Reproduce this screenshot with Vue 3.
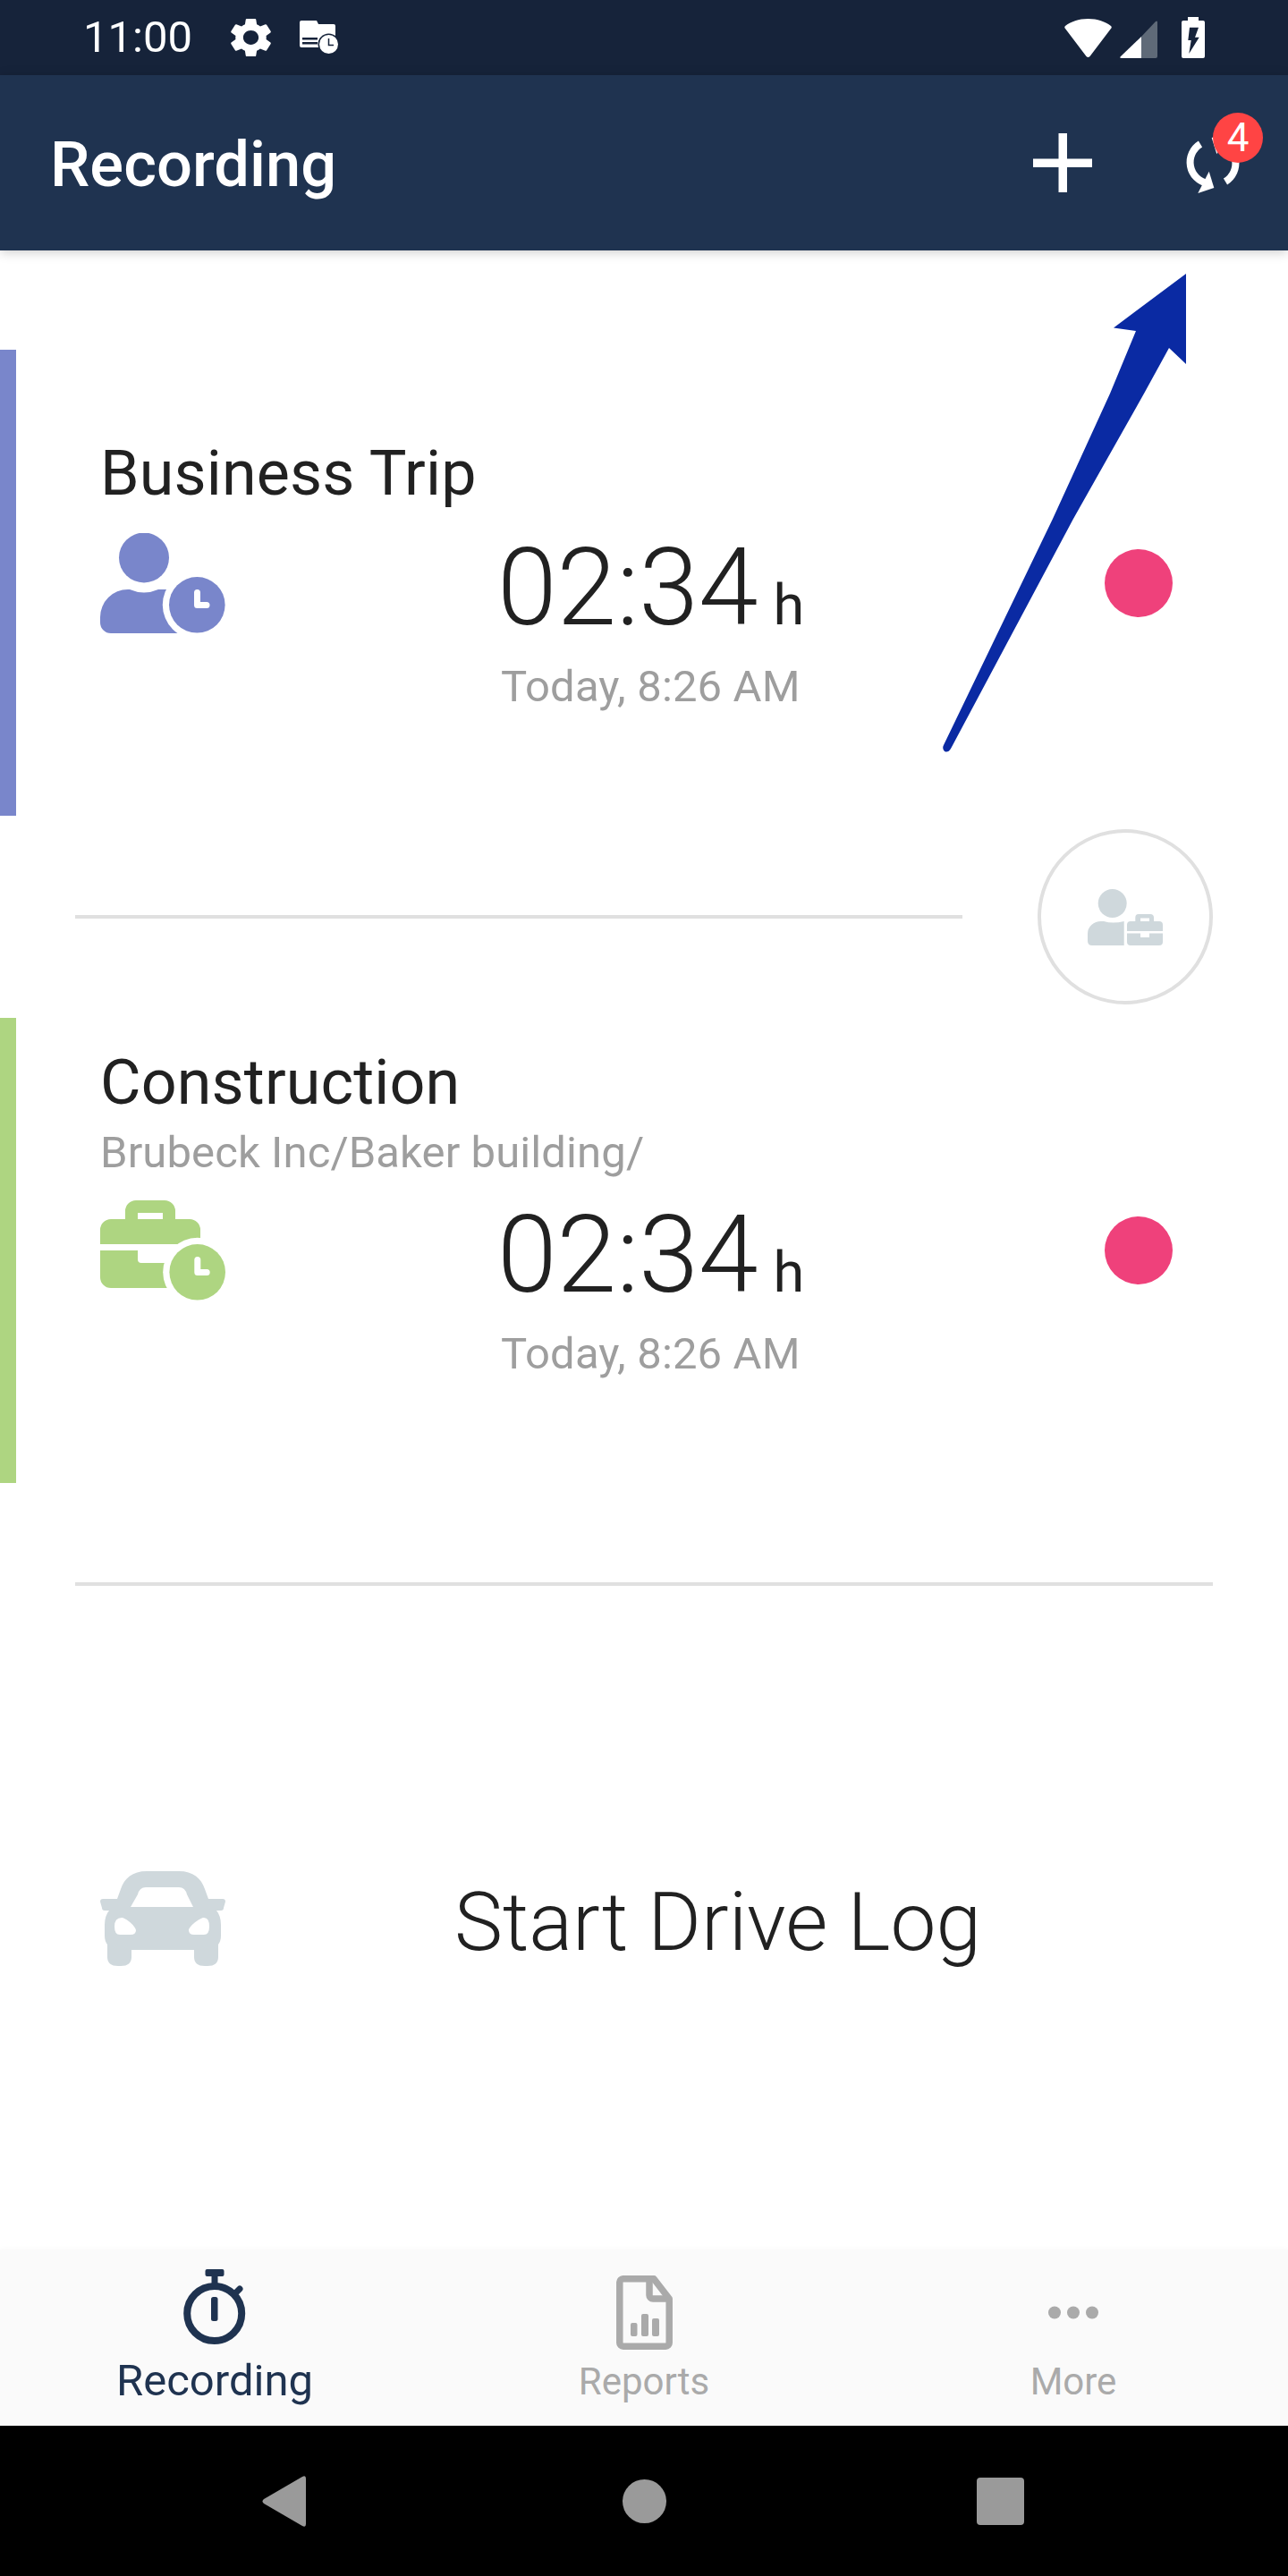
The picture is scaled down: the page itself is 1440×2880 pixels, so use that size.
<template>
  <div class="phone">
    <header class="status-bar">
      <span class="clock">11:00</span>
      <svg class="gear" viewBox="2.6 2 18.8 20" preserveAspectRatio="none">
        <path fill="#fff" d="M19.14 12.94c.04-.3.06-.61.06-.94 0-.32-.02-.64-.07-.94l2.03-1.58c.18-.14.23-.41.12-.61l-1.92-3.32c-.12-.22-.37-.29-.59-.22l-2.39.96c-.5-.38-1.03-.7-1.62-.94l-.36-2.54c-.04-.24-.24-.41-.48-.41h-3.84c-.24 0-.43.17-.47.41l-.36 2.54c-.59.24-1.13.57-1.62.94l-2.39-.96c-.22-.08-.47 0-.59.22L2.74 8.87c-.12.21-.08.47.12.61l2.03 1.58c-.05.3-.09.63-.09.94s.02.64.07.94l-2.03 1.58c-.18.14-.23.41-.12.61l1.92 3.32c.12.22.37.29.59.22l2.39-.96c.5.38 1.03.7 1.62.94l.36 2.54c.05.24.24.41.48.41h3.84c.24 0 .44-.17.47-.41l.36-2.54c.59-.24 1.13-.56 1.62-.94l2.39.96c.22.08.47 0 .59-.22l1.92-3.32c.12-.22.07-.47-.12-.61l-2.01-1.58zM12 15.6c-1.98 0-3.6-1.62-3.6-3.6s1.62-3.6 3.6-3.6 3.6 1.62 3.6 3.6-1.62 3.6-3.6 3.6z" />
      </svg>
      <svg class="notif" viewBox="0 0 43 37">
        <path fill="#fff" d="M2 0H19L21 4H38Q40 4 40 6V30H2Q0 30 0 28V2Q0 0 2 0Z" />
        <path fill="#16233a" d="M3 19H20V21.500H3ZM3 24H20V26.500H3Z" />
        <circle cx="32.500" cy="26.500" r="12" fill="#16233a" />
        <circle cx="32.500" cy="26.500" r="10.500" fill="#fff" />
        <path fill="none" stroke="#16233a" stroke-width="1.500" d="M32.500 20V27.500H38" />
      </svg>
      <div class="status-right">
        <svg class="wifi" viewBox="0 0 53 43">
          <path fill="#fff" d="M26.500 0C37 0 46 3.500 52 8Q53.500 9.500 52 11L28.500 42Q26.500 44 24.500 42L1 11Q-.5 9.500 1 8C7 3.500 16 0 26.500 0Z" />
        </svg>
        <svg class="signal" viewBox="0 0 42 42">
          <path fill="#5f6a78" d="M24 18L40 1Q42 -.5 42 2V40Q42 42 40 42H24Z" />
          <path fill="#fff" d="M24 18V42H2Q-1 42 1 40Z" />
        </svg>
        <svg class="battery" viewBox="0 0 26 46">
          <path fill="#fff" d="M7 0H19V4H24Q26 4 26 6V44Q26 46 24 46H2Q0 46 0 44V6Q0 4 2 4H7Z" />
          <path fill="#16233a" d="M9 11.700H19L15 22.700H19.700L8.300 41L10.700 26H7.300Z" />
        </svg>
      </div>
    </header>

    <div class="app-bar">
      <h1 class="app-title">Recording</h1>
      <svg class="plus" viewBox="0 0 66 66">
        <path fill="#fff" d="M28.500 0H38V28.500H66V38H38V66H28.500V38H0V28.500H28.500Z" />
      </svg>
      <div class="sync">
        <svg viewBox="0 0 80 80" width="80" height="80">
          <g>
            <path fill="none" stroke="#fff" stroke-width="8" d="M26 19A24 24 0 0 0 34 63" />
            <path fill="#fff" d="M35.700 49.700L41.300 68L23.300 74Z" />
          </g>
          <g transform="rotate(180 40 40)">
            <path fill="none" stroke="#fff" stroke-width="8" d="M26 19A24 24 0 0 0 34 63" />
            <path fill="#fff" d="M35.700 49.700L41.300 68L23.300 74Z" />
          </g>
        </svg>
        <span class="badge">4</span>
      </div>
    </div>

    <main class="content">
      <section class="card business">
        <h2 class="card-title">Business Trip</h2>
        <div class="card-row">
          <svg class="card-icon" viewBox="0 0 140 112">
            <circle cx="49" cy="27.500" r="28" fill="#7986cb" />
            <path fill="#7986cb" d="M0 100V94A31 31 0 0 1 31 63H33Q49 70 65 63H100V112H12A12 12 0 0 1 0 100Z" />
            <circle cx="108.300" cy="80.300" r="38.500" fill="#fff" />
            <circle cx="108.300" cy="80.300" r="31.300" fill="#7986cb" />
            <path fill="none" stroke="#fff" stroke-width="7" stroke-linejoin="round" stroke-linecap="round" d="M108.500 66.500V80.500H119" />
          </svg>
          <div class="timer">
            <div class="time">02:34<span class="unit">h</span></div>
            <div class="since">Today, 8:26 AM</div>
          </div>
          <span class="rec-dot"></span>
        </div>
      </section>

      <div class="switch-row">
        <div class="rule"></div>
        <div class="switch">
          <svg viewBox="0 0 84 63" width="84" height="63">
            <circle cx="27.700" cy="16" r="16" fill="#cfd8dc" />
            <path fill="#cfd8dc" d="M0 58V50A15 14 0 0 1 15 36H18Q28 39 40.700 36V63H5Q0 63 0 58Z" />
            <path fill="#cfd8dc" fill-rule="evenodd" d="M44 47V40Q44 36 48 36H53.300V32Q53.300 28 57 28H70Q74 28 74 32V36H80Q84 36 84 40V47ZM59 32.500V36H69V32.500Z" />
            <path fill="#cfd8dc" d="M44 49.500H59V54H69V49.500H84V59Q84 63 80 63H48Q44 63 44 59Z" />
          </svg>
        </div>
      </div>

      <section class="card construction">
        <h2 class="card-title">Construction</h2>
        <p class="card-sub">Brubeck Inc/Baker building/</p>
        <div class="card-row">
          <svg class="card-icon" viewBox="0 0 140 112">
            <path fill="#aed581" fill-rule="evenodd" d="M0 49V33A12 12 0 0 1 12 21H28V12A12 12 0 0 1 40 0H72A12 12 0 0 1 84 12V21H100A12 12 0 0 1 112 33V49ZM42 14V21H70V14Z" />
            <path fill="#aed581" d="M0 56H42V66A4 4 0 0 0 46 70H110V86A12 12 0 0 1 98 98H12A12 12 0 0 1 0 86Z" />
            <circle cx="108.700" cy="80.300" r="38.500" fill="#fff" />
            <circle cx="108.700" cy="80.300" r="31.300" fill="#aed581" />
            <path fill="none" stroke="#fff" stroke-width="7" stroke-linejoin="round" stroke-linecap="round" d="M108.800 66.500V80.500H119.200" />
          </svg>
          <div class="timer">
            <div class="time">02:34<span class="unit">h</span></div>
            <div class="since">Today, 8:26 AM</div>
          </div>
          <span class="rec-dot"></span>
        </div>
      </section>

      <div class="rule rule-full"></div>

      <div class="drive-log">
        <svg class="car" viewBox="0 0 140 106">
          <path fill="#cfd8dc" fill-rule="evenodd" d="M52 0H88C104 0 113 8 117 20L121 31H137Q140 31 140 34L138 41Q138 44 135 44H130Q135 50 135 60V72Q135 78 132 82V96Q132 106 120 106H117Q105 106 105 96V88H35V96Q35 106 23 106H20Q8 106 8 96V82Q5 78 5 72V60Q5 50 10 44H5Q2 44 2 41L0 34Q0 31 3 31H19L23 20C27 8 36 0 52 0ZM51 18Q44 18 42 26L34 40H104L97 26Q95 18 88 18ZM24 52C29 52 40 62 40 66Q40 71 34 71H22Q16 71 16 62Q16 52 24 52ZM116 52C111 52 99 62 99 66Q99 71 105 71H116Q122 71 122 62Q122 52 116 52Z" />
        </svg>
        <span class="drive-text">Start Drive Log</span>
      </div>

      <svg class="callout" viewBox="0 0 300 560" width="300" height="560">
        <path fill="#0a2aa3" d="M276 6V107L257 89L229 140L150 280L13 537Q10 542 6 540Q3 537 5 533L127 280L191 140L220 70L195 66.500Z" />
      </svg>
    </main>

    <nav class="tabs">
      <div v-for="tab in tabs" :key="tab.label" :class="['tab', { active: tab.active }]">
        <div class="tab-icon">
          <svg v-if="tab.label === 'Recording'" viewBox="0 0 70 84" width="70" height="84">
            <circle cx="34.700" cy="49.500" r="30.500" fill="none" stroke="#1f3350" stroke-width="8" />
            <rect x="24.500" y="0" width="21" height="8" rx="2" fill="#1f3350" />
            <rect x="31.500" y="6" width="7" height="10" fill="#1f3350" />
            <rect x="31" y="31" width="7.500" height="27" rx="2.500" fill="#1f3350" />
            <path stroke="#1f3350" stroke-width="7" stroke-linecap="round" d="M58 27L63 22" />
          </svg>
          <svg v-else-if="tab.label === 'Reports'" viewBox="0 0 63 83" width="63" height="83">
            <path fill="none" stroke="#aaa" stroke-width="7.500" stroke-linejoin="round" d="M7.500 3.800H42L59.200 26V75A4 4 0 0 1 55.200 79.200H7.800A4 4 0 0 1 3.800 75V7.500A4 4 0 0 1 7.500 3.800Z" />
            <path fill="none" stroke="#aaa" stroke-width="7.500" d="M37 4V22A4 4 0 0 0 41 26H59" />
            <rect x="16" y="53" width="7.500" height="15" rx="2" fill="#aaa" />
            <rect x="28" y="43" width="8" height="25" rx="2" fill="#aaa" />
            <rect x="40" y="48" width="8" height="20" rx="2" fill="#aaa" />
          </svg>
          <svg v-else class="dots" viewBox="0 0 56 15" width="56" height="15">
            <circle cx="7" cy="7.500" r="7" fill="#aaa" />
            <circle cx="28" cy="7.500" r="7" fill="#aaa" />
            <circle cx="49" cy="7.500" r="7" fill="#aaa" />
          </svg>
        </div>
        <span class="tab-label">{{ tab.label }}</span>
      </div>
    </nav>

    <footer class="nav-bar">
      <svg viewBox="0 0 49 57" width="49" height="57">
        <path fill="#9a9a9a" d="M45 1Q49 -1 49 3V54Q49 58 45 56L2 31Q-1 28.500 2 26Z" />
      </svg>
      <span class="nav-home"></span>
      <span class="nav-recent"></span>
    </footer>
  </div>
</template>

<script setup>
const tabs = [
  { label: "Recording", active: true },
  { label: "Reports", active: false },
  { label: "More", active: false },
];
</script>

<style scoped>
.phone {
  width: 1440px;
  height: 2880px;
  display: flex;
  flex-direction: column;
  background: #fff;
  font-family: Roboto, "Liberation Sans", sans-serif;
  overflow: hidden;
}

.status-bar {
  height: 84px;
  flex: none;
  display: flex;
  align-items: center;
  padding: 0 93px 0 93px;
  background: #16233a;
}

.clock {
  color: #fff;
  font-size: 49px;
  line-height: 84px;
}

.gear {
  width: 45px;
  height: 44px;
  margin-left: 43px;
}

.notif {
  width: 43px;
  height: 37px;
  margin: 0 0 2px 32px;
  overflow: visible;
}

.status-right {
  margin-left: auto;
  display: flex;
  align-items: center;
}

.wifi {
  width: 53px;
  height: 43px;
}

.signal {
  width: 42px;
  height: 42px;
  margin: 4px 0 0 9px;
}

.battery {
  width: 26px;
  height: 46px;
  margin-left: 27px;
}

.app-bar {
  height: 196px;
  flex: none;
  display: flex;
  align-items: center;
  padding: 0 44px 0 56px;
  background: #1f3350;
  box-shadow: 0 2px 12px rgba(0, 0, 0, 0.2);
  position: relative;
  z-index: 1;
}

.app-title {
  margin: 4px auto 0 0;
  color: #fff;
  font-size: 70.5px;
  font-weight: 500;
}

.plus {
  width: 66px;
  height: 66px;
  margin-right: 95px;
}

.sync {
  position: relative;
  width: 80px;
  height: 80px;
}

.badge {
  position: absolute;
  left: 40px;
  top: -16px;
  width: 56px;
  height: 56px;
  border-radius: 50%;
  background: #ff4444;
  color: #fff;
  font-size: 44px;
  line-height: 56px;
  text-align: center;
}

.content {
  flex: 1;
  position: relative;
  display: flex;
  flex-direction: column;
}

.card {
  height: 520px;
  flex: none;
  box-sizing: border-box;
  padding-left: 94px;
  border-left: 18px solid transparent;
}

.business {
  height: 521px;
  margin-top: 111px;
  padding-top: 98px;
  border-left-color: #7986cb;
}

.construction {
  margin-top: 15px;
  padding-top: 32px;
  border-left-color: #aed581;
}

.card-title {
  margin: 0;
  color: #212121;
  font-size: 70px;
  font-weight: 400;
  letter-spacing: 0.15px;
  line-height: 80px;
}

.card-sub {
  margin: 6px 0 -6px;
  color: #9e9e9e;
  font-size: 49px;
  letter-spacing: 0.1px;
  line-height: 65px;
}

.card-row {
  display: flex;
  align-items: flex-start;
  margin-top: 27px;
}

.card-icon {
  width: 140px;
  height: 112px;
  flex: none;
}

.timer {
  margin-left: 304px;
  width: 380px;
}

.time {
  color: #212121;
  font-size: 120px;
  font-weight: 300;
  line-height: 140px;
  margin-top: -9px;
}

.unit {
  margin-left: 17px;
  font-size: 63px;
  font-weight: 400;
}

.since {
  color: #9e9e9e;
  font-size: 49px;
  letter-spacing: 0.15px;
  line-height: 60px;
  margin: -9px 0 0 4px;
}

.rec-dot {
  width: 76px;
  height: 76px;
  border-radius: 50%;
  background: #ef417b;
  margin: 18px 0 0 299px;
  flex: none;
}

.switch-row {
  display: flex;
  align-items: center;
  margin-top: 15px;
  padding: 0 84px;
}

.rule {
  height: 4px;
  flex: 1;
  background: #e0e0e0;
  margin-right: 84px;
}

.rule-full {
  flex: none;
  margin: 111px 84px 0;
}

.switch {
  width: 196px;
  height: 196px;
  box-sizing: border-box;
  border: 4px solid #e0e0e0;
  border-radius: 50%;
  display: flex;
  align-items: center;
  justify-content: center;
}

.drive-log {
  display: flex;
  align-items: center;
  margin-top: 319px;
  padding-left: 112px;
}

.car {
  width: 140px;
  height: 106px;
  flex: none;
}

.drive-text {
  margin-left: 256px;
  padding-top: 8px;
  color: #212121;
  font-size: 91px;
  font-weight: 300;
  line-height: 98px;
}

/* annotation arrow drawn over the screen */
.callout {
  position: absolute;
  left: 1050px;
  top: 20px;
  pointer-events: none;
}

.tabs {
  height: 197px;
  flex: none;
  display: grid;
  grid-template-columns: repeat(3, 480px);
  background: #fafafa;
  box-shadow: 0 -2px 4px rgba(0, 0, 0, 0.02);
}

.tab {
  display: flex;
  flex-direction: column;
  align-items: center;
  color: #aaa;
  font-size: 42px;
}

.tab.active {
  color: #1f3350;
  font-size: 49px;
}

.tab-icon {
  height: 118px;
  display: flex;
  align-items: center;
  justify-content: center;
  margin-top: 11px;
}

.active .tab-icon {
  margin-top: 5px;
}

.tab-label {
  line-height: 50px;
  margin-top: -6px;
}

.active .tab-label {
  margin-top: -1px;
}

.nav-bar {
  height: 168px;
  flex: none;
  background: #000;
  display: flex;
  align-items: center;
  padding-left: 293px;
}

.nav-home {
  width: 49px;
  height: 49px;
  border-radius: 50%;
  background: #9a9a9a;
  margin-left: 354px;
}

.nav-recent {
  width: 53px;
  height: 53px;
  border-radius: 4px;
  background: #9a9a9a;
  margin-left: 347px;
}
</style>

<style>
html,
body {
  margin: 0;
  background: #fff;
}
</style>
